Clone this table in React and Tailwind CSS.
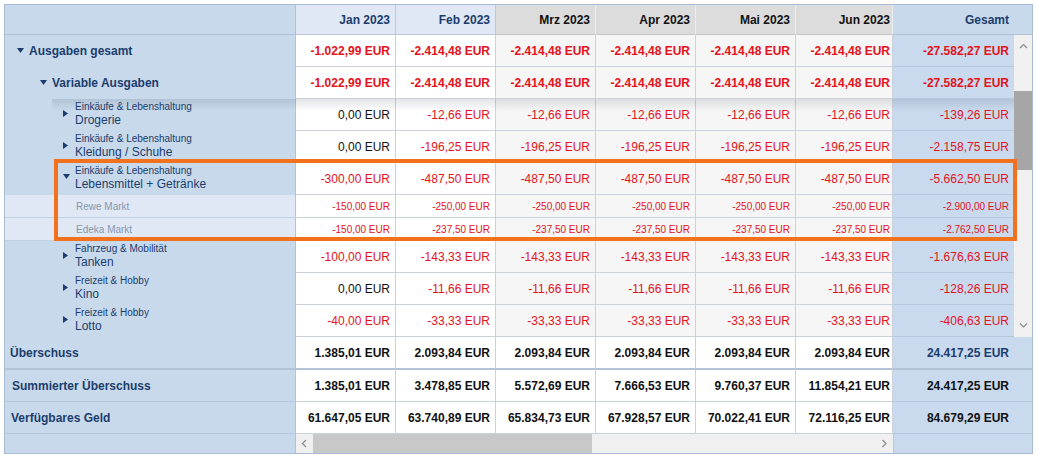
import React from "react";

const MONTHS = ["Jan 2023", "Feb 2023", "Mrz 2023", "Apr 2023", "Mai 2023", "Jun 2023"];
const MONTH_W = ["w-[100px]", "w-[100px]", "w-[100px]", "w-[100px]", "w-[100px]", "w-[97px]"];
const MONTH_PR = ["pr-[5px]", "pr-[5px]", "pr-[5px]", "pr-[5px]", "pr-[5px]", "pr-[2px]"];

const BODY = [
  { type: "group", level: 0, label: "Ausgaben gesamt", vals: ["-1.022,99", "-2.414,48", "-2.414,48", "-2.414,48", "-2.414,48", "-2.414,48"], total: "-27.582,27" },
  { type: "group", level: 1, label: "Variable Ausgaben", vals: ["-1.022,99", "-2.414,48", "-2.414,48", "-2.414,48", "-2.414,48", "-2.414,48"], total: "-27.582,27" },
  { type: "cat", cat: "Einkäufe & Lebenshaltung", label: "Drogerie", vals: ["0,00", "-12,66", "-12,66", "-12,66", "-12,66", "-12,66"], total: "-139,26", shadow: true },
  { type: "cat", cat: "Einkäufe & Lebenshaltung", label: "Kleidung / Schuhe", vals: ["0,00", "-196,25", "-196,25", "-196,25", "-196,25", "-196,25"], total: "-2.158,75" },
  { type: "cat", cat: "Einkäufe & Lebenshaltung", label: "Lebensmittel + Getränke", open: true, vals: ["-300,00", "-487,50", "-487,50", "-487,50", "-487,50", "-487,50"], total: "-5.662,50" },
  { type: "sub", label: "Rewe Markt", vals: ["-150,00", "-250,00", "-250,00", "-250,00", "-250,00", "-250,00"], total: "-2.900,00" },
  { type: "sub", label: "Edeka Markt", vals: ["-150,00", "-237,50", "-237,50", "-237,50", "-237,50", "-237,50"], total: "-2.762,50" },
  { type: "cat", cat: "Fahrzeug & Mobilität", label: "Tanken", vals: ["-100,00", "-143,33", "-143,33", "-143,33", "-143,33", "-143,33"], total: "-1.676,63" },
  { type: "cat", cat: "Freizeit & Hobby", label: "Kino", vals: ["0,00", "-11,66", "-11,66", "-11,66", "-11,66", "-11,66"], total: "-128,26" },
  { type: "cat", cat: "Freizeit & Hobby", label: "Lotto", vals: ["-40,00", "-33,33", "-33,33", "-33,33", "-33,33", "-33,33"], total: "-406,63" },
];

const FOOTER = [
  { label: "Überschuss", pl: "pl-[5px]", vals: ["1.385,01", "2.093,84", "2.093,84", "2.093,84", "2.093,84", "2.093,84"], total: "24.417,25", blue: true, thick: true },
  { label: "Summierter Überschuss", pl: "pl-[7px]", vals: ["1.385,01", "3.478,85", "5.572,69", "7.666,53", "9.760,37", "11.854,21"], total: "24.417,25" },
  { label: "Verfügbares Geld", pl: "pl-[6px]", vals: ["61.647,05", "63.740,89", "65.834,73", "67.928,57", "70.022,41", "72.116,25"], total: "84.679,29" },
];

function TriDown({ className = "" }) {
  return (
    <svg width="7" height="5" viewBox="0 0 7 5" className={className}>
      <path d="M0 0H7L3.5 5Z" fill="#1b3d6d" />
    </svg>
  );
}
function TriRight({ className = "" }) {
  return (
    <svg width="5" height="7" viewBox="0 0 5 7" className={className}>
      <path d="M0 0L5 3.5L0 7Z" fill="#1b3d6d" />
    </svg>
  );
}

function Chevron({ dir }) {
  const d = {
    up: "M1 5L4.5 1.5L8 5",
    down: "M1 1.5L4.5 5L8 1.5",
    left: "M5 1L1.5 4.5L5 8",
    right: "M1.5 1L5 4.5L1.5 8",
  }[dir];
  const w = dir === "up" || dir === "down" ? 9 : 7;
  const h = dir === "up" || dir === "down" ? 7 : 9;
  return (
    <svg width={w} height={h} viewBox={`0 0 ${w} ${h}`}>
      <path d={d} fill="none" stroke="#8a8a8a" strokeWidth="1.2" />
    </svg>
  );
}

function colorOf(v) {
  return v.startsWith("-") ? "text-[#e3121b]" : "text-[#111111]";
}

function BodyValues({ row }) {
  const bold = row.type === "group";
  const small = row.type === "sub";
  const txt = small ? "text-[10px]" : "text-[12px]";
  return (
    <>
      {row.vals.map((v, i) => (
        <div
          key={i}
          className={`flex items-center justify-end border-r border-b border-[#cbd2dc] ${MONTH_W[i]} ${MONTH_PR[i]} ${i < 2 ? "bg-white" : "bg-[#f6f6f6]"}`}
        >
          <span className={`${txt} ${bold ? "font-bold" : ""} ${colorOf(v)} whitespace-nowrap`}>{v} EUR</span>
        </div>
      ))}
      <div className="flex w-[121px] items-center justify-end border-b border-[#b6c8dd] bg-[#c9daee] pr-[5px]">
        <span className={`${txt} ${bold ? "font-bold" : ""} ${colorOf(row.total)} whitespace-nowrap`}>{row.total} EUR</span>
      </div>
    </>
  );
}

function BodyLabel({ row }) {
  if (row.type === "group") {
    return (
      <div className={`flex w-[291px] items-center border-r border-[#b1c3d8] bg-[#c8d9ec] ${row.level === 0 ? "pl-[12px]" : "pl-[35px]"}`}>
        <TriDown className="mb-[2px] mr-[5px]" />
        <span className="text-[12px] font-bold text-[#1b3d6d] whitespace-nowrap">{row.label}</span>
      </div>
    );
  }
  if (row.type === "cat") {
    return (
      <div className="flex w-[291px] items-center border-r border-[#b1c3d8] bg-[#c8d9ec] pl-[58px]">
        <div className="flex w-[12px] items-center">
          {row.open ? <TriDown className="mb-[6px]" /> : <TriRight className="mb-[4px]" />}
        </div>
        <div className="flex flex-col pb-[2px]">
          <span className="text-[10px] leading-[12px] text-[#1b3d6d] whitespace-nowrap">{row.cat}</span>
          <span className="text-[12px] leading-[14px] text-[#1b3d6d] whitespace-nowrap">{row.label}</span>
        </div>
      </div>
    );
  }
  return (
    <div className="flex w-[291px] items-center border-r border-b border-r-[#b1c3d8] border-b-[#c2d1e2] bg-[#dfe8f4] pl-[71px]">
      <span className="text-[10px] text-[#8797ad] whitespace-nowrap">{row.label}</span>
    </div>
  );
}

function BodyRow({ row }) {
  const h = row.type === "sub" ? "h-[23px]" : "h-[32px]";
  return (
    <div className={`relative flex ${h}`}>
      <BodyLabel row={row} />
      <BodyValues row={row} />
      {row.shadow && (
        <div className="pointer-events-none absolute left-[47px] right-0 top-0 h-[12px] bg-linear-to-b from-[rgba(40,50,70,0.13)] to-transparent" />
      )}
    </div>
  );
}

function FooterRow({ row }) {
  const border = row.thick ? "border-b-2 border-[#b3c3d6]" : "border-b border-[#b9c9dc]";
  return (
    <div className={`flex ${row.thick ? "h-[33px]" : "h-[32px]"}`}>
      <div className={`flex w-[291px] items-center border-r border-r-[#b1c3d8] bg-[#c8d9ec] ${row.pl} ${border}`}>
        <span className="text-[12px] font-bold text-[#1b3d6d] whitespace-nowrap">{row.label}</span>
      </div>
      {row.vals.map((v, i) => (
        <div
          key={i}
          className={`flex items-center justify-end border-r border-r-[#cbd2dc] bg-white ${MONTH_W[i]} ${MONTH_PR[i]} ${row.thick ? "border-b-2 border-b-[#b3c3d6]" : "border-b border-b-[#cbd2dc]"}`}
        >
          <span className="text-[12px] font-bold text-[#111111] whitespace-nowrap">{v} EUR</span>
        </div>
      ))}
      <div className={`flex w-[139px] items-center justify-end bg-[#c9daee] pr-[23px] ${row.thick ? "border-b-2 border-[#b3c3d6]" : "border-b border-[#b6c8dd]"}`}>
        <span className={`text-[12px] font-bold whitespace-nowrap ${row.blue ? "text-[#1b3d6d]" : "text-[#111111]"}`}>{row.total} EUR</span>
      </div>
    </div>
  );
}

export default function App() {
  return (
    <div className="h-[456px] w-[1037px] bg-white font-['Liberation_Sans',Arial,sans-serif]">
      <div className="h-[4px]" />
      <div className="relative ml-[4px] h-[450px] w-[1029px] border border-[#a9bcd3]">
        {/* header */}
        <div className="flex h-[30px]">
          <div className="w-[291px] border-r border-b border-[#adc0d6] bg-[#c8d9ec]" />
          {MONTHS.map((m, i) => (
            <div
              key={m}
              className={`flex items-center justify-end ${MONTH_W[i]} ${MONTH_PR[i]} border-b ${
                i < 2
                  ? "border-r border-[#b9c8da] bg-[#dfe8f4] text-[#1b3d6d]"
                  : "border-r border-r-[#ececec] border-b-[#c4c4c4] bg-[#dcdcdc] text-[#111111]"
              } ${i === 5 ? "border-r-[#c2c2c2]" : ""}`}
            >
              <span className="text-[12px] font-bold whitespace-nowrap">{m}</span>
            </div>
          ))}
          <div className="flex w-[139px] items-center justify-end border-b border-[#adc0d6] bg-[#c8d9ec] pr-[23px]">
            <span className="text-[12px] font-bold text-[#1b3d6d]">Gesamt</span>
          </div>
        </div>

        {/* scrolling body */}
        <div className="flex h-[302px]">
          <div className="flex w-[1009px] flex-col">
            {BODY.map((r, i) => (
              <BodyRow key={i} row={r} />
            ))}
          </div>
          <div className="flex w-[18px] flex-col bg-[#f0f0f0]">
            <div className="flex h-[17px] items-end justify-center pb-[2px]">
              <Chevron dir="up" />
            </div>
            <div className="h-[39px]" />
            <div className="h-[79px] bg-[#a6a6a6]" />
            <div className="flex-1" />
            <div className="flex h-[17px] items-start justify-center pt-[2px]">
              <Chevron dir="down" />
            </div>
          </div>
        </div>

        {/* footer */}
        {FOOTER.map((r, i) => (
          <FooterRow key={i} row={r} />
        ))}

        {/* horizontal scrollbar */}
        <div className="flex h-[19px]">
          <div className="w-[291px] border-r border-[#b1c3d8] bg-[#c8d9ec]" />
          <div className="flex w-[597px] bg-[#f0f0f0]">
            <div className="flex w-[17px] items-center justify-center">
              <Chevron dir="left" />
            </div>
            <div className="w-[279px] bg-[#c8c8c8]" />
            <div className="flex-1" />
            <div className="flex w-[17px] items-center justify-center">
              <Chevron dir="right" />
            </div>
          </div>
          <div className="w-[139px] border-l border-[#b6c8dd] bg-[#c9daee]" />
        </div>

        {/* highlight frame */}
        <div className="pointer-events-none absolute left-[49px] top-[154px] h-[82px] w-[963px] border-4 border-[#f2711c]" />
      </div>
    </div>
  );
}
